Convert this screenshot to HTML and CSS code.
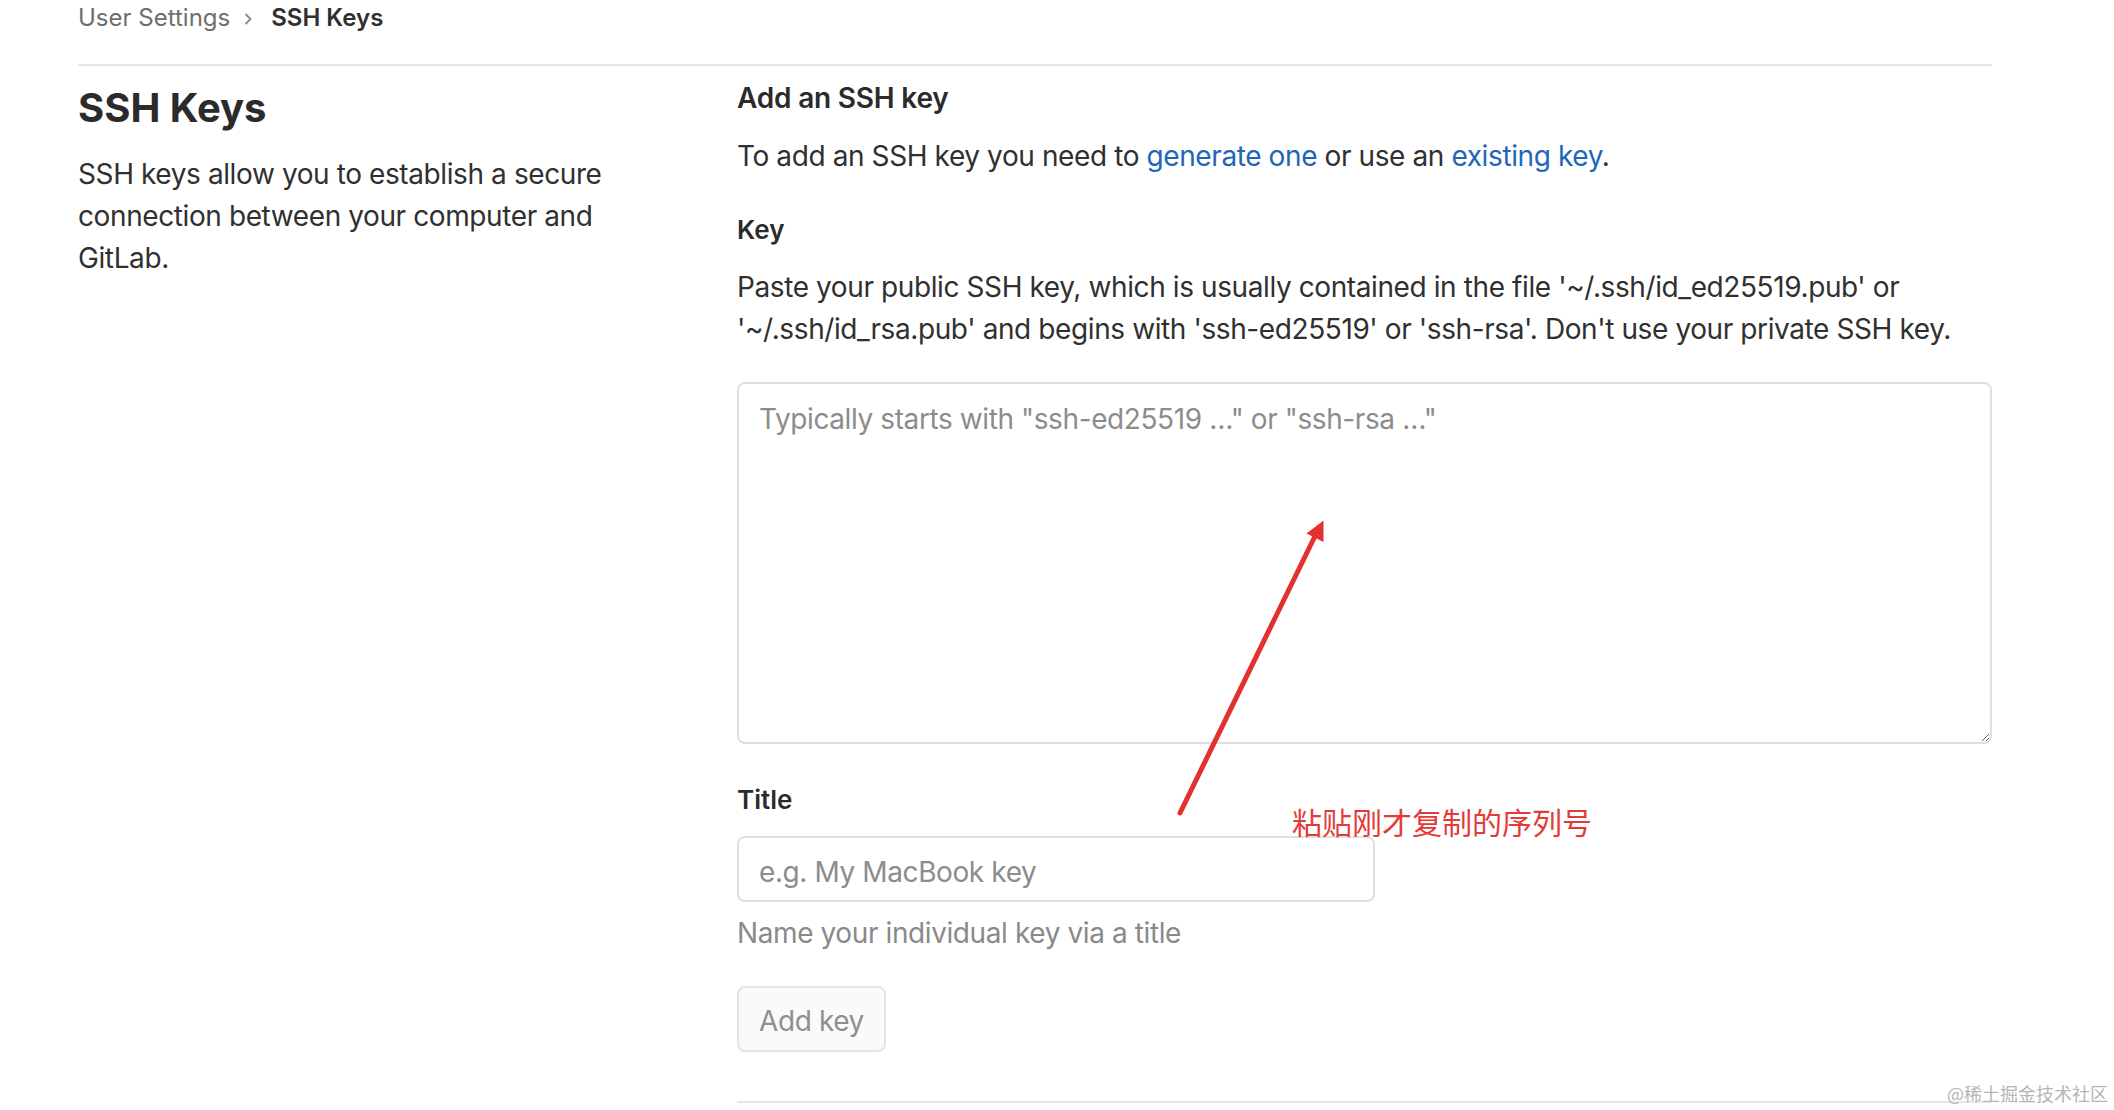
FILE: index.html
```html
<!DOCTYPE html>
<html lang="en">
<head>
<meta charset="utf-8">
<title>SSH Keys · User Settings</title>
<link rel="stylesheet" href="styles.css">
</head>
<body>
<div class="page">
  <nav class="breadcrumb">
    <span class="crumb">User Settings</span>
    <svg class="chev" width="10" height="14" viewBox="0 0 10 14"><path d="M3 2.5 L7.5 7 L3 11.5" fill="none" stroke="#8a8a8a" stroke-width="1.8" stroke-linecap="round" stroke-linejoin="round"/></svg>
    <span class="crumb current">SSH Keys</span>
  </nav>
  <div class="rule"></div>
  <div class="settings">
    <section class="intro">
      <h1 class="title">SSH Keys</h1>
      <p class="lead">SSH keys allow you to establish a secure connection between your computer and GitLab.</p>
    </section>
    <section class="form">
      <h4 class="form-heading">Add an SSH key</h4>
      <p class="text">To add an SSH key you need to <a class="link" href="#">generate one</a> or use an <a class="link" href="#">existing key</a>.</p>
      <label class="label label-key" for="key">Key</label>
      <p class="text text-paste">Paste your public SSH key, which is usually contained in the file '~/.ssh/id_ed25519.pub' or '~/.ssh/id_rsa.pub' and begins with 'ssh-ed25519' or 'ssh-rsa'. Don't use your private SSH key.</p>
      <textarea id="key" class="key-area" placeholder="Typically starts with &quot;ssh-ed25519 …&quot; or &quot;ssh-rsa …&quot;"></textarea>
      <label class="label label-title" for="title">Title</label>
      <input id="title" class="title-input" type="text" placeholder="e.g. My MacBook key">
      <p class="help">Name your individual key via a title</p>
      <button class="btn" type="button" disabled>Add key</button>
      <div class="bottom-rule"></div>
    </section>
  </div>
</div>
<svg class="annot-arrow" width="2114" height="1110" viewBox="0 0 2114 1110">
  <line x1="1180" y1="813" x2="1316" y2="534" stroke="#e3312f" stroke-width="5" stroke-linecap="round"/>
  <polygon points="1323.5,520.5 1306.5,533.5 1323.5,542" fill="#e3312f"/>
</svg>
<div class="annot-text">粘贴刚才复制的序列号</div>
<div class="watermark">@稀土掘金技术社区</div>
</body>
</html>
```

FILE: styles.css
```css
* { box-sizing: border-box; }
html, body { margin: 0; padding: 0; background: #fff; }
body {
  font-family: Inter, "Noto Sans", "Noto Sans CJK SC", sans-serif;
  color: #303030;
  position: relative;
  width: 2114px;
  height: 1110px;
  overflow: hidden;
  letter-spacing: -0.4px;
}
.page { padding: 0 122px 0 78px; }

.breadcrumb {
  display: flex;
  align-items: center;
  height: 36px;
  font-size: 24px;
  line-height: 36px;
  letter-spacing: 0;
}
.crumb { color: #6e6e6e; }
.crumb.current { color: #303030; font-weight: 600; margin-left: 18px; }
.chev { margin-left: 13px; margin-top: 1px; }

.rule { margin-top: 28px; height: 2px; background: #e6e6e6; }

.settings { display: grid; grid-template-columns: 659px 1fr; }

.intro { padding-right: 59px; }
.title {
  margin: 18px 0 0;
  font-size: 40px;
  line-height: 48px;
  font-weight: 700;
  color: #2b2b2b;
  letter-spacing: 0;
}
.lead {
  margin: 21px 0 0;
  font-size: 28px;
  line-height: 42px;
}

.form { display: flex; flex-direction: column; align-items: flex-start; }
.form-heading {
  margin: 13px 0 0;
  font-size: 28px;
  line-height: 38px;
  font-weight: 600;
  color: #2b2b2b;
  letter-spacing: -0.2px;
}
.text {
  margin: 18px 0 0;
  font-size: 28px;
  line-height: 42px;
}
.link { color: #1f66ba; text-decoration: none; }
.label {
  display: block;
  font-size: 26px;
  line-height: 36px;
  font-weight: 600;
  color: #2b2b2b;
  letter-spacing: 0;
}
.label-key { margin-top: 35px; }
.text-paste { margin-top: 18px; }

.key-area {
  display: block;
  margin-top: 32px;
  width: 100%;
  height: 362px;
  padding: 14px 20px;
  border: 2px solid #e0e0e0;
  border-radius: 8px;
  font-family: inherit;
  font-size: 28px;
  line-height: 42px;
  letter-spacing: -0.4px;
  color: #303030;
  background: #fff;
  outline: none;
}
.key-area::placeholder, .title-input::placeholder { color: #8c8c8c; opacity: 1; }

.label-title { margin-top: 38px; }
.title-input {
  display: block;
  margin-top: 18px;
  width: 638px;
  height: 66px;
  padding: 5px 20px 0;
  border: 2px solid #e0e0e0;
  border-radius: 8px;
  font-family: inherit;
  font-size: 28px;
  letter-spacing: -0.4px;
  color: #303030;
  background: #fff;
  outline: none;
}
.help {
  margin: 10px 0 0;
  font-size: 28px;
  line-height: 42px;
  color: #8a8a8a;
}
.btn {
  margin-top: 32px;
  height: 66px;
  padding: 3px 20px 0;
  border: 2px solid #e4e4e4;
  border-radius: 8px;
  background: #fafafa;
  font-family: inherit;
  font-size: 28px;
  letter-spacing: -0.4px;
  color: #8f8f8f;
}
.bottom-rule {
  align-self: stretch;
  margin-top: 49px;
  height: 2px;
  background: #e6e6e6;
}

.annot-arrow { position: absolute; left: 0; top: 0; pointer-events: none; }
.annot-text {
  position: absolute;
  left: 1292px;
  top: 806px;
  font-family: "Noto Sans CJK SC", sans-serif;
  font-size: 30px;
  line-height: 30px;
  letter-spacing: 0;
  color: #e43a38;
  white-space: nowrap;
}
.watermark {
  position: absolute;
  right: 6px;
  top: 1082px;
  font-family: "Noto Sans CJK SC", sans-serif;
  font-size: 18px;
  line-height: 22px;
  letter-spacing: 0;
  color: #b5b5b5;
  white-space: nowrap;
}
```
